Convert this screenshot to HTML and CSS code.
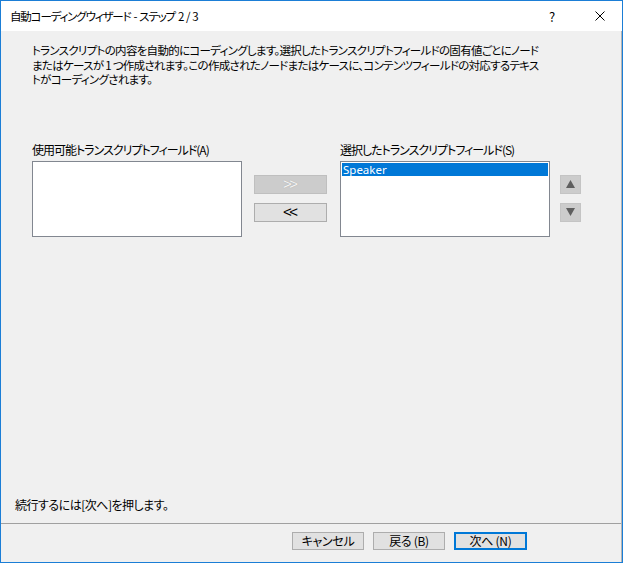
FILE: index.html
```html
<!DOCTYPE html>
<html lang="ja">
<head>
<meta charset="utf-8">
<title>自動コーディングウィザード</title>
<link rel="stylesheet" href="styles.css">
</head>
<body>
<div class="window">
  <div class="titlebar">
    <span class="title">自動コーディングウィザード - ステップ 2 / 3</span>
    <span class="help">?</span>
    <span class="close">
      <svg width="10" height="10" viewBox="0 0 10 10"><path d="M0.5 0.5 L9.5 9.5 M9.5 0.5 L0.5 9.5" stroke="#000" stroke-width="1" fill="none"/></svg>
    </span>
  </div>
  <div class="body">
    <div class="content">
      <div class="desc">
        <div class="line">トランスクリプトの内容を自動的にコーディングします。選択したトランスクリプトフィールドの固有値ごとにノード</div>
        <div class="line">またはケースが 1 つ作成されます。この作成されたノードまたはケースに、コンテンツフィールドの対応するテキス</div>
        <div class="line">トがコーディングされます。</div>
      </div>
      <div class="fields">
        <div class="col">
          <div class="label">使用可能トランスクリプトフィールド(A)</div>
          <div class="listbox"></div>
        </div>
        <div class="movebtns">
          <div class="btn small disabled"><span class="chev">&gt;&gt;</span></div>
          <div class="btn small"><span class="chev">&lt;&lt;</span></div>
        </div>
        <div class="col">
          <div class="label">選択したトランスクリプトフィールド(S)</div>
          <div class="listbox"><div class="item selected">Speaker</div></div>
        </div>
        <div class="orderbtns">
          <div class="arrowbtn"><svg width="9" height="8" viewBox="0 0 9 8"><path d="M4.5 0 L9 8 L0 8 Z" fill="#5f5f5f"/></svg></div>
          <div class="arrowbtn"><svg width="9" height="8" viewBox="0 0 9 8"><path d="M0 0 L9 0 L4.5 8 Z" fill="#5f5f5f"/></svg></div>
        </div>
      </div>
      <div class="spacer"></div>
      <p class="hint">続行するには[次へ]を押します。</p>
    </div>
    <div class="footer">
      <div class="btn">キャンセル</div>
      <div class="btn">戻る (B)</div>
      <div class="btn default">次へ (N)</div>
    </div>
  </div>
</div>
</body>
</html>
```
FILE: styles.css
```css
* { box-sizing: border-box; }
html, body { margin: 0; padding: 0; }
body {
  width: 623px;
  height: 563px;
  font-family: "Noto Sans CJK JP", "Noto Sans", sans-serif;
  font-size: 12px;
  font-feature-settings: "palt";
  color: #000;
}
.window {
  width: 623px;
  height: 563px;
  border: 1px solid #1b7ed6;
  display: flex;
  flex-direction: column;
  background: #f0f0f0;
}
.titlebar {
  height: 30px;
  background: #fff;
  display: flex;
  align-items: center;
  padding-left: 9px;
  flex: none;
}
.title { flex: 1; font-size: 11.5px; letter-spacing: -1.15px; word-spacing: 1.5px; }
.help { width: 12px; margin-right: 34px; font-size: 13px; }
.close { width: 10px; height: 10px; margin-right: 17px; display: flex; }
.body {
  flex: 1;
  display: flex;
  flex-direction: column;
  border-right: 1px solid #b4b4b4;
}
.content {
  flex: 1;
  display: flex;
  flex-direction: column;
  padding: 12px 0 0 31px;
  border-bottom: 1px solid #a0a0a0;
}
.desc {
  white-space: nowrap;
  font-size: 11.5px;
  letter-spacing: -0.7px;
}
.line { height: 14.5px; line-height: 14.5px; }
.fields {
  display: flex;
  margin-top: 55px;
}
.col { width: 210px; flex: none; }
.label { line-height: 15px; height: 15px; margin-bottom: 4px; letter-spacing: -1px; }
.listbox {
  height: 76px;
  background: #fff;
  border: 1px solid #828790;
  padding: 1px;
}
.item {
  height: 13px;
  line-height: 13px;
  padding-left: 1px;
  font-family: "Noto Sans", sans-serif;
  font-size: 11.5px;
}
.item.selected { background: #0078d7; color: #fff; }
.movebtns {
  display: flex;
  flex-direction: column;
  gap: 9px;
  margin: 33px 13px 0 12px;
}
.btn {
  width: 73px;
  height: 19px;
  background: #e1e1e1;
  border: 1px solid #adadad;
  display: flex;
  align-items: center;
  justify-content: center;
  line-height: 1;
}
.btn.small {
  font-family: "Liberation Sans", sans-serif;
  font-size: 15px;
  overflow: hidden;
}
.chev {
  display: inline-block;
  letter-spacing: -2.5px;
  padding-right: 2.5px;
  padding-bottom: 1px;
}
.btn.disabled { background: #cccccc; border-color: #bfbfbf; color: #f4f4f4; text-shadow: 0 0 1px #9a9a9a; }
.orderbtns {
  display: flex;
  flex-direction: column;
  gap: 9px;
  margin: 33px 0 0 10px;
}
.arrowbtn {
  width: 21px;
  height: 19px;
  background: #cccccc;
  border: 1px solid #c4c4c4;
  display: flex;
  align-items: center;
  justify-content: center;
}
.spacer { flex: 1; }
.hint { margin: 0 0 11px -17px; line-height: 15px; letter-spacing: -0.5px; }
.footer {
  height: 38px;
  flex: none;
  display: flex;
  gap: 9px;
  padding: 8px 0 0 291px;
}
.footer .btn { width: 72px; height: 18px; letter-spacing: -0.3px; }
.footer .btn.default { border: 2px solid #0078d7; width: 73px; }
```
